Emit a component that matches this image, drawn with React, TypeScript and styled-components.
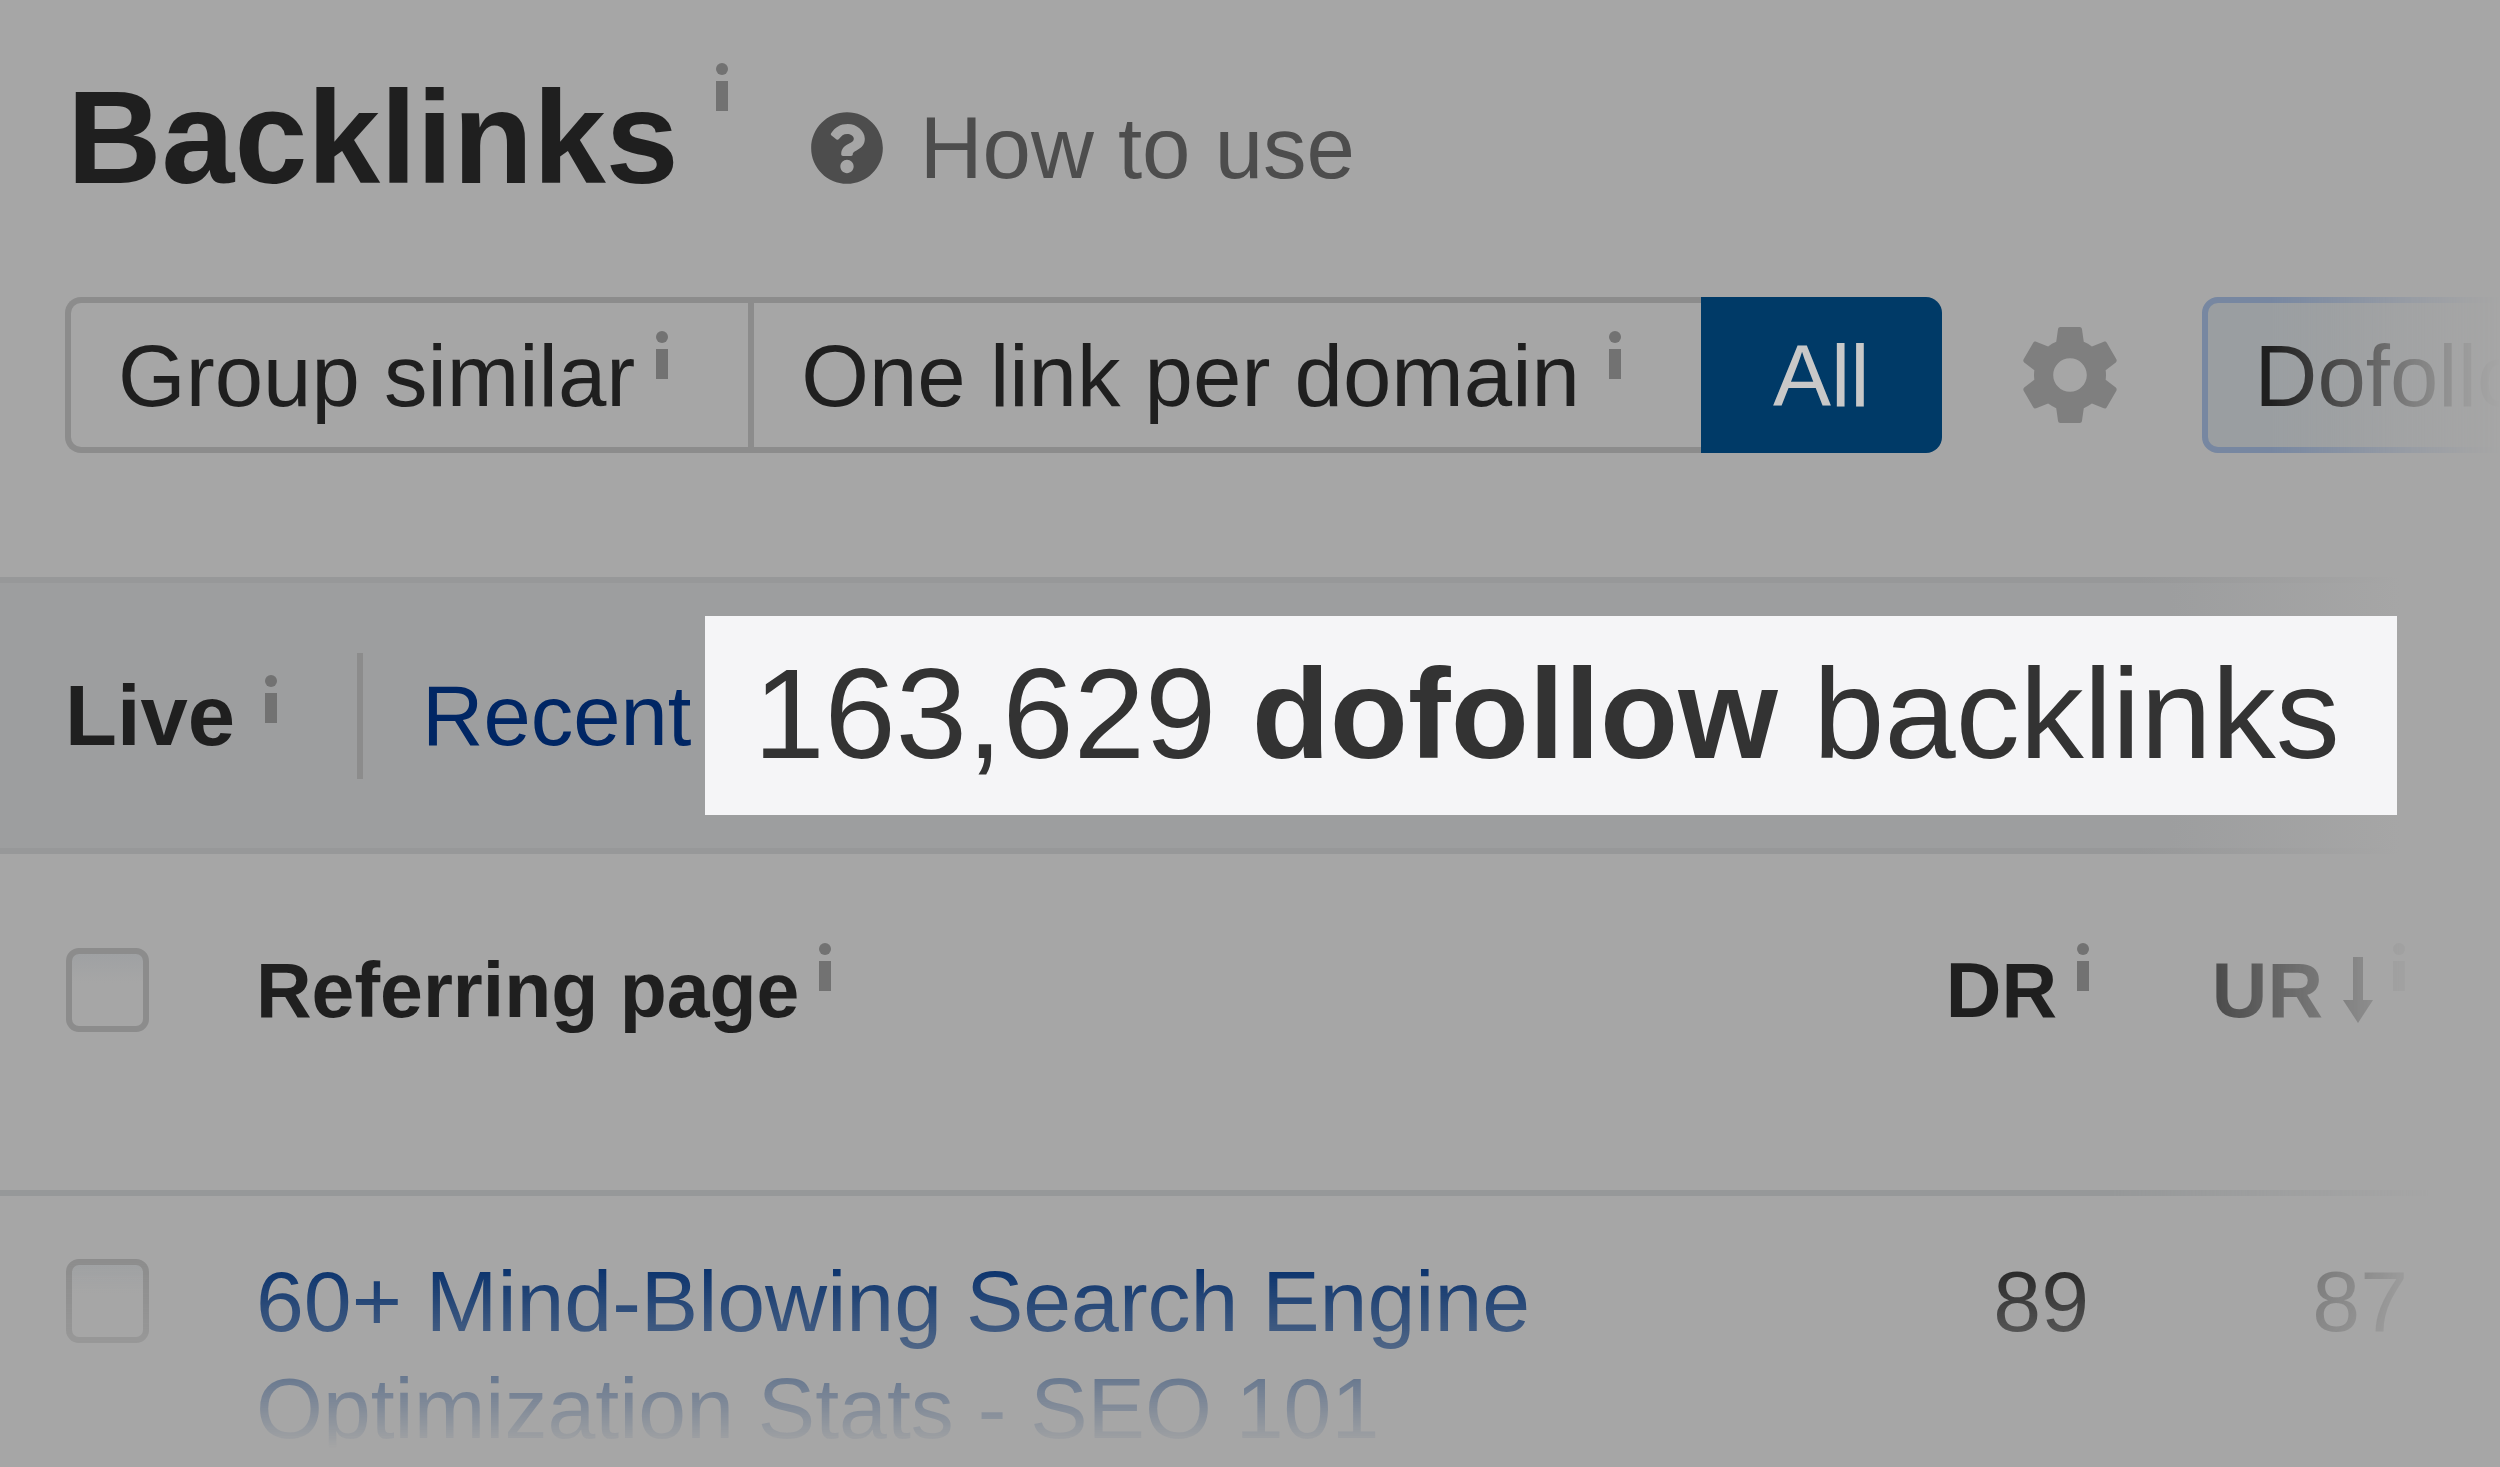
import React from "react";
import styled, { createGlobalStyle } from "styled-components";
import { FaQuestionCircle } from "react-icons/fa";

const color = {
  page: "#a6a6a6",
  bar: "#9d9e9f",
  barLine: "#979899",
  line: "#8c8c8c",
  text: "#1f1f1f",
  muted: "#4d4d4d",
  hint: "#727272",
  gear: "#7f7f7f",
  active: "#003a67",
  activeText: "#c8c8c8",
  link: "#002b69",
  recent: "#002664",
  chipLine: "#7787a1",
  chip: "#9a9ea1",
};

const GlobalStyle = createGlobalStyle`
  *, *::before, *::after { box-sizing: border-box; }
  body {
    margin: 0;
    background: ${color.page};
    color: ${color.text};
    font-family: "Liberation Sans", Arial, Helvetica, sans-serif;
  }
  button {
    margin: 0;
    padding: 0;
    border: 0;
    background: none;
    color: inherit;
    font: inherit;
    cursor: pointer;
  }
`;

const Page = styled.main`
  min-height: 100vh;
  overflow: hidden;
  white-space: nowrap;
`;

const Header = styled.header`
  display: flex;
  padding: 63px 67px 0;
`;

const Label = styled.span<{ $gap: number; $line: number; $end?: boolean }>`
  display: flex;
  align-items: flex-start;
  justify-content: ${(p) => (p.$end ? "flex-end" : "flex-start")};
  gap: ${(p) => p.$gap}px;
  line-height: ${(p) => p.$line}px;
`;

const Title = styled.h1`
  margin: 0;
  font-size: 131px;
  font-weight: 700;
`;

const HowTo = styled.button`
  display: flex;
  align-items: center;
  align-self: flex-end;
  gap: 36px;
  margin-left: 82px;
  color: ${color.muted};
  font-size: 87px;
  line-height: 130px;
`;

const Toolbar = styled.div`
  display: flex;
  align-items: center;
  gap: 80px;
  margin-top: 84px;
  padding-left: 65px;
  font-size: 87px;
  mask-image: linear-gradient(
    to right,
    #000 calc(100% - 230px),
    rgba(0, 0, 0, 0.3) calc(100% - 90px),
    rgba(0, 0, 0, 0.07) calc(100% - 32px),
    transparent
  );
`;

const Segments = styled.div`
  display: flex;
  flex: none;
`;

const Segment = styled.button<{ $active?: boolean }>`
  height: 156px;
  padding: ${(p) => (p.$active ? "2px 72px 0" : "2px 80px 0 47px")};
  border: 6px solid ${color.line};
  border-right-width: 0;
  line-height: 90px;

  &:first-child {
    border-radius: 16px 0 0 16px;
  }
  &:last-child {
    border: 0;
    border-radius: 0 16px 16px 0;
    background: ${color.active};
    color: ${color.activeText};
  }
`;

const GearButton = styled.button`
  display: flex;
  flex: none;
  width: 100px;
  color: ${color.gear};
`;

const Chip = styled.button`
  flex: none;
  height: 156px;
  padding: 2px 47px 0;
  border: 6px solid ${color.chipLine};
  border-radius: 16px;
  background: ${color.chip};
  line-height: 90px;
`;

const barLine = `linear-gradient(to right, ${color.barLine} calc(100% - 360px), ${color.page} calc(100% - 100px))`;

const Bar = styled.section`
  display: flex;
  align-items: center;
  height: 277px;
  margin-top: 124px;
  padding: 0 65px;
  background:
    ${barLine} top / 100% 6px no-repeat,
    ${barLine} bottom / 100% 6px no-repeat,
    linear-gradient(to right, ${color.bar} calc(100% - 330px), ${color.page} calc(100% - 100px));
  font-size: 85px;
`;

const Divider = styled.span`
  flex: none;
  width: 6px;
  height: 126px;
  margin: 0 59px 0 80px;
  background: ${color.line};
`;

const RecentLink = styled.a`
  color: ${color.recent};
  line-height: 82px;
  text-decoration: none;
`;

const Highlight = styled.p`
  margin: 0 0 0 14px;
  padding: 0 57px 3px 48px;
  background: #f5f5f7;
  color: #333333;
  font-size: 128px;
  line-height: 196px;
`;

const TableFade = styled.div`
  mask-image:
    linear-gradient(to right, #000 calc(100% - 390px), transparent calc(100% - 70px)),
    linear-gradient(to bottom, #000 402px, transparent 594px);
  mask-composite: intersect;
`;

const Table = styled.table`
  width: 100%;
  table-layout: fixed;
  border-spacing: 0;

  th, td {
    padding: 0;
    text-align: left;
    vertical-align: top;
  }
`;

const Col = styled.col<{ $width?: number }>`
  width: ${(p) => (p.$width ? `${p.$width}px` : "auto")};
`;

const HeadRow = styled.tr`
  height: 342px;
  font-size: 77px;

  && > * {
    padding-top: 89px;
    border-bottom: 6px solid #969899;
  }
  && > :first-child {
    padding: 94px 0 0 66px;
  }
  && > :last-child {
    padding-right: 95px;
  }
`;

const BodyRow = styled.tr`
  font-size: 86px;
  line-height: 107px;

  && > * {
    padding-top: 52px;
  }
  && > :first-child {
    padding: 63px 0 0 66px;
  }
  && > :last-child {
    padding-right: 92px;
  }
`;

const NumberCell = styled.td`
  && {
    text-align: right;
  }
`;

const PageLink = styled.a`
  color: ${color.link};
  text-decoration: none;
`;

const Check = styled.input`
  appearance: none;
  display: block;
  width: 83px;
  height: 84px;
  margin: 0;
  border: 6px solid ${color.line};
  border-radius: 13px;
  background: linear-gradient(to bottom, #9fa1a3, ${color.page} 40%);
`;

const Svg = styled.svg`
  display: block;
  flex: none;
  fill: currentColor;
`;

const HintSvg = styled(Svg)`
  color: ${color.hint};
`;

const Hint = () => (
  <HintSvg width="12" height="48" viewBox="0 0 12 48" aria-hidden="true">
    <circle cx="6" cy="6" r="6" />
    <rect y="18" width="12" height="30" />
  </HintSvg>
);

const Gear = () => (
  <Svg width="96" height="96" viewBox="2 2 20 20" aria-hidden="true">
    <path d="M19.43 12.98c.04-.32.07-.64.07-.98s-.03-.66-.07-.98l2.11-1.65c.19-.15.24-.42.12-.64l-2-3.46c-.12-.22-.39-.3-.61-.22l-2.49 1c-.52-.4-1.08-.73-1.69-.98l-.38-2.65C14.46 2.18 14.25 2 14 2h-4c-.25 0-.46.18-.49.42l-.38 2.65c-.61.25-1.17.59-1.69.98l-2.49-1c-.23-.09-.49 0-.61.22l-2 3.46c-.13.22-.07.49.12.64l2.11 1.65c-.04.32-.07.65-.07.98s.03.66.07.98l-2.11 1.65c-.19.15-.24.42-.12.64l2 3.46c.12.22.39.3.61.22l2.49-1c.52.4 1.08.73 1.69.98l.38 2.65c.03.24.24.42.49.42h4c.25 0 .46-.18.49-.42l.38-2.65c.61-.25 1.17-.59 1.69-.98l2.49 1c.23.09.49 0 .61-.22l2-3.46c.12-.22.07-.49-.12-.64l-2.11-1.65zM12 15.5c-1.93 0-3.5-1.57-3.5-3.5s1.57-3.5 3.5-3.5 3.5 1.57 3.5 3.5-1.57 3.5-3.5 3.5z" />
  </Svg>
);

const ArrowBox = styled.span`
  padding-top: 14px;
`;

const SortArrow = () => (
  <ArrowBox>
    <Svg width="30" height="66" viewBox="0 0 30 66" aria-hidden="true">
      <path d="M10 0h10v43h10L15 66 0 43h10z" />
    </Svg>
  </ArrowBox>
);

export default function App() {
  return (
    <Page>
      <GlobalStyle />
      <Header>
        <Label $gap={37} $line={150}>
          <Title>Backlinks</Title>
          <Hint />
        </Label>
        <HowTo type="button">
          <FaQuestionCircle size={74} />
          How to use
        </HowTo>
      </Header>

      <Toolbar>
        <Segments role="group" aria-label="Grouping">
          <Segment type="button">
            <Label $gap={21} $line={90}>
              Group similar
              <Hint />
            </Label>
          </Segment>
          <Segment type="button">
            <Label $gap={29} $line={90}>
              One link per domain
              <Hint />
            </Label>
          </Segment>
          <Segment type="button" $active aria-pressed="true">
            All
          </Segment>
        </Segments>
        <GearButton type="button" aria-label="Settings">
          <Gear />
        </GearButton>
        <Chip type="button">Dofollow</Chip>
      </Toolbar>

      <Bar>
        <Label $gap={30} $line={82}>
          <strong>Live</strong>
          <Hint />
        </Label>
        <Divider />
        <RecentLink href="#recent">Recent</RecentLink>
        <Highlight>
          163,629 <strong>dofollow</strong> backlinks
        </Highlight>
      </Bar>

      <TableFade>
        <Table>
          <colgroup>
            <Col $width={256} />
            <Col />
            <Col $width={200} />
            <Col $width={411} />
          </colgroup>
          <thead>
            <HeadRow>
              <td>
                <Check type="checkbox" aria-label="Select all pages" />
              </td>
              <th scope="col">
                <Label $gap={20} $line={94}>
                  Referring page
                  <Hint />
                </Label>
              </th>
              <th scope="col">
                <Label $gap={20} $line={94} $end>
                  DR
                  <Hint />
                </Label>
              </th>
              <th scope="col">
                <Label $gap={20} $line={94} $end>
                  UR
                  <SortArrow />
                  <Hint />
                </Label>
              </th>
            </HeadRow>
          </thead>
          <tbody>
            <BodyRow>
              <td>
                <Check type="checkbox" aria-label="Select page" />
              </td>
              <td>
                <PageLink href="#page">
                  60+ Mind-Blowing Search Engine
                  <br />
                  Optimization Stats - SEO 101
                </PageLink>
              </td>
              <NumberCell>89</NumberCell>
              <NumberCell>87</NumberCell>
            </BodyRow>
          </tbody>
        </Table>
      </TableFade>
    </Page>
  );
}
